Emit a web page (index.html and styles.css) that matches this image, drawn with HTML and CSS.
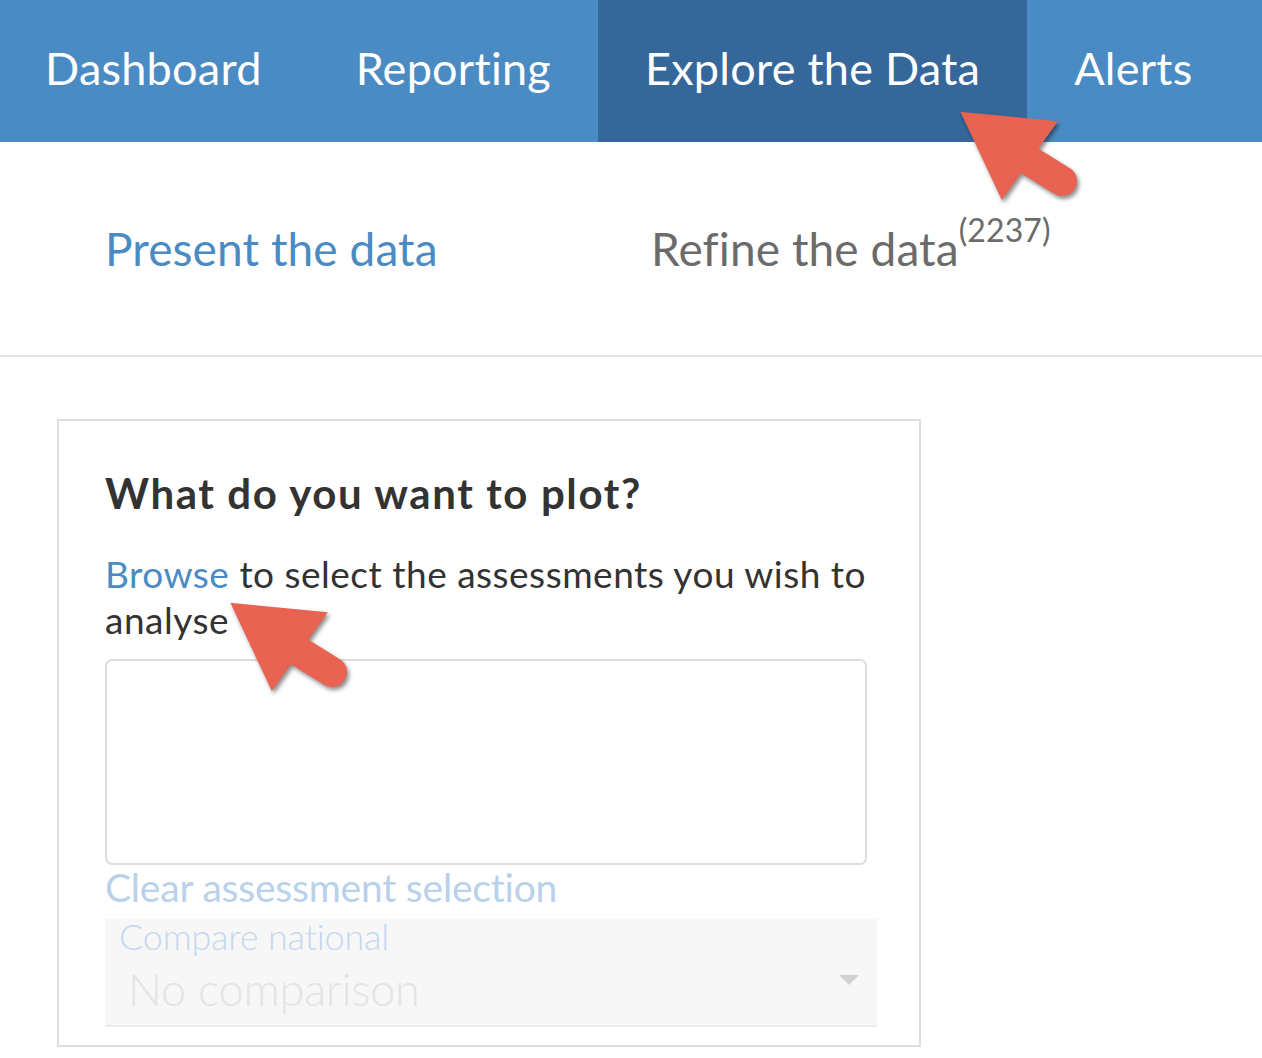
FILE: index.html
```html
<!DOCTYPE html>
<html>
<head>
<meta charset="utf-8">
<link rel="stylesheet" href="styles.css">
</head>
<body>
<div class="page">
  <nav class="topnav">
    <a class="tab">Dashboard</a>
    <a class="tab">Reporting</a>
    <a class="tab active">Explore the Data</a>
    <a class="tab">Alerts</a>
  </nav>
  <div class="subnav">
    <a class="sub sub-present">Present the data</a>
    <a class="sub sub-refine">Refine the data<sup class="count">(2237)</sup></a>
  </div>
  <section class="card">
    <h2 class="card-title">What do you want to plot?</h2>
    <p class="card-text"><a class="link">Browse</a> to select the assessments you wish to analyse</p>
    <div class="selection-box"></div>
    <a class="clear-link">Clear assessment selection</a>
    <div class="select">
      <div class="select-label">Compare national</div>
      <div class="select-value">No comparison</div>
      <span class="caret"></span>
    </div>
  </section>

  <svg class="pointer pointer-nav" width="140" height="120" viewBox="-10 -10 140 120">
    <g class="pointer-shape">
      <polygon points="0,0 94,9 40,85" />
      <line x1="55" y1="40" x2="100" y2="68" />
    </g>
  </svg>
  <svg class="pointer pointer-browse" width="140" height="120" viewBox="-10 -10 140 120">
    <g class="pointer-shape">
      <polygon points="0,0 94,9 40,85" />
      <line x1="55" y1="40" x2="100" y2="68" />
    </g>
  </svg>
</div>
</body>
</html>
```
FILE: styles.css
```css
html, body {
  margin: 0;
  padding: 0;
  background: #ffffff;
}
body {
  font-family: Lato, "Open Sans", "Liberation Sans", sans-serif;
  color: #333333;
}
.page {
  position: relative;
  width: 1262px;
  min-height: 1058px;
  overflow: hidden;
}
.topnav {
  display: flex;
  height: 142px;
  background: #4b8bc4;
}
.tab {
  display: flex;
  align-items: center;
  padding: 0 47px 6px 47px;
  color: #ffffff;
  font-size: 45px;
  letter-spacing: 0.25px;
}
.tab:first-child {
  padding-left: 45px;
}
.tab.active {
  background: #35679b;
}
.subnav {
  display: grid;
  grid-template-columns: 546px auto;
  padding: 0 0 0 105px;
  height: 213px;
  border-bottom: 2px solid #e3e3e3;
  align-items: start;
}
.sub {
  margin-top: 79px;
  font-size: 46px;
  line-height: 56px;
  letter-spacing: 0.1px;
}
.sub-present {
  color: #4b8bc4;
}
.sub-refine {
  color: #6b6b6b;
}
.count {
  font-size: 32px;
  vertical-align: 0;
  position: relative;
  top: -24px;
  margin-left: 0;
}
.card {
  margin: 62px 0 0 57px;
  width: 864px;
  border: 2px solid #dedede;
  padding: 48px 0 18px 46px;
  box-sizing: border-box;
  height: 628px;
}
.card-title {
  margin: 0;
  font-size: 42px;
  line-height: 48px;
  font-weight: 700;
  letter-spacing: 1.6px;
  color: #333333;
}
.card-text {
  margin: 34px 0 0 0;
  width: 775px;
  font-size: 37px;
  line-height: 46px;
  letter-spacing: 0.5px;
  color: #333333;
}
.link {
  color: #4b8bc4;
}
.selection-box {
  margin-top: 16px;
  width: 762px;
  height: 206px;
  border: 2px solid #dddddd;
  border-radius: 7px;
  box-sizing: border-box;
}
.clear-link {
  display: block;
  margin-top: 0;
  font-size: 39px;
  line-height: 44px;
  color: #b9d1ea;
  letter-spacing: -0.2px;
}
.select {
  position: relative;
  margin-top: 10px;
  width: 772px;
  height: 108px;
  background: #f7f7f7;
  border-bottom: 2px solid #ececec;
  box-sizing: border-box;
  padding: 0 0 0 14px;
}
.select-label {
  font-size: 36px;
  line-height: 34px;
  color: #c4d8ee;
  font-weight: 300;
  letter-spacing: -0.2px;
}
.select-value {
  margin: 10px 0 0 9px;
  font-size: 45px;
  line-height: 52px;
  color: #e4e4e4;
  font-weight: 300;
  letter-spacing: -0.2px;
}
.caret {
  position: absolute;
  right: 18px;
  top: 56px;
  width: 0;
  height: 0;
  border-left: 10px solid transparent;
  border-right: 10px solid transparent;
  border-top: 10px solid #d2d2d2;
}
.pointer {
  position: absolute;
  overflow: visible;
}
.pointer-nav {
  left: 952px;
  top: 103px;
}
.pointer-browse {
  left: 222px;
  top: 594px;
}
.pointer-shape {
  fill: #e86352;
  stroke: #e86352;
  filter: drop-shadow(2px 3px 2px rgba(0, 0, 0, 0.45));
}
.pointer-shape polygon {
  stroke-width: 2;
  stroke-linejoin: miter;
}
.pointer-shape line {
  stroke-width: 30;
  stroke-linecap: round;
}
```
